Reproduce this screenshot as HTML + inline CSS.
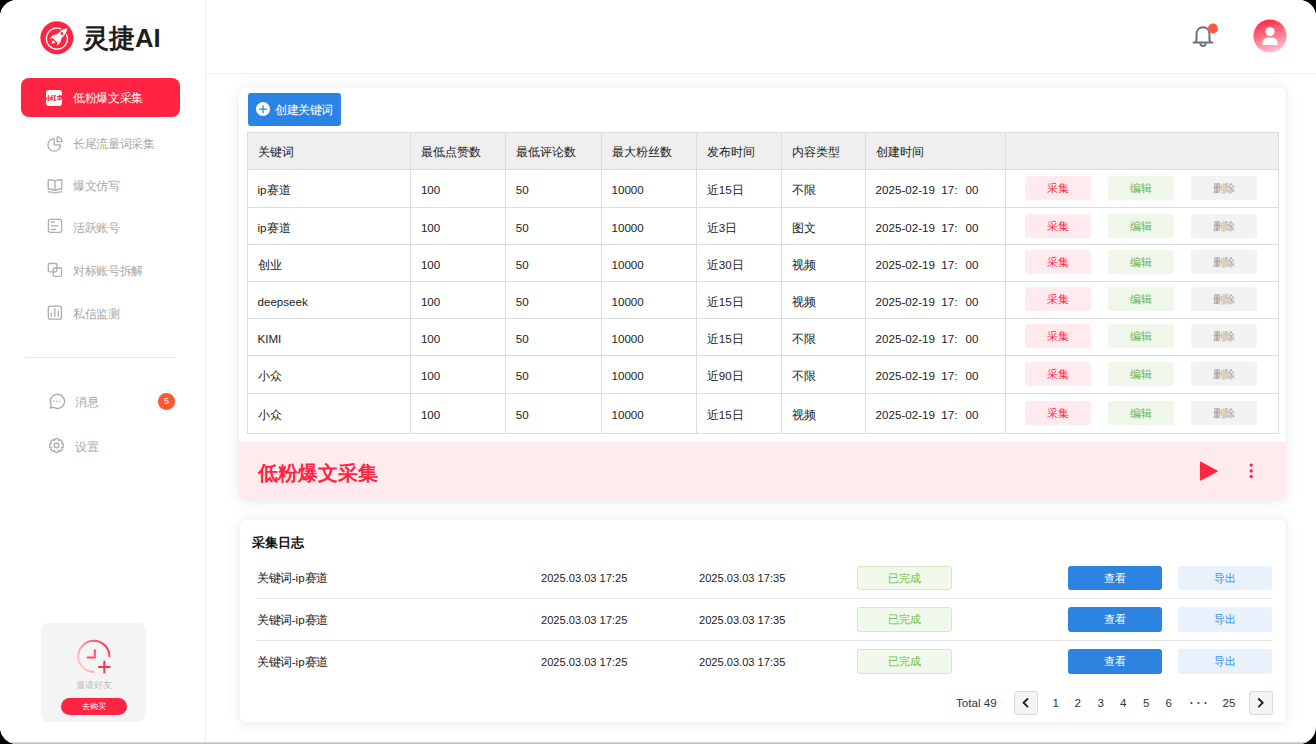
<!DOCTYPE html>
<html><head><meta charset="utf-8"><style>
*{box-sizing:border-box;margin:0;padding:0}
html,body{width:1316px;height:744px;overflow:hidden;background:#000}
body{font-family:"Liberation Sans",sans-serif;color:#222;position:relative}
.win{position:absolute;left:0;top:0;width:1316px;height:744px;background:#fff;border-radius:17px;overflow:hidden}
.bline{position:absolute;left:0;top:742px;width:1316px;height:2px;background:linear-gradient(#dcdcdc,#b8b8b8)}
.abs{position:absolute}
svg{position:absolute;overflow:visible}
.side{position:absolute;left:0;top:0;width:206px;height:743px;border-right:1px solid #eef0f3;background:#fff}
.hdr{position:absolute;left:206px;top:0;width:1110px;height:74px;border-bottom:1px solid #eef0f3;background:#fff}
.logo-t{position:absolute;left:82.5px;top:19.5px;font-size:25.5px;font-weight:bold;color:#1d1d1f;line-height:36px;letter-spacing:0.2px;white-space:nowrap}
.act{position:absolute;left:21px;top:78px;width:159px;height:39px;border-radius:8px;background:#ff2442}
.mi{position:absolute;left:72.6px;font-size:12px;transform:scale(0.97);transform-origin:0 50%;color:#a8a8a8;line-height:14px;white-space:nowrap}
.card{position:absolute;background:#fff;border-radius:5px;box-shadow:0 0 3px rgba(0,0,0,0.03),0 1px 16px rgba(0,0,0,0.09)}
.th,.td{position:absolute;font-size:11.6px;line-height:14px;white-space:nowrap;color:#222}
.hl{position:absolute;height:1px;background:#dcdcdc}
.vl{position:absolute;width:1px;background:#dcdcdc}
.b{position:absolute;width:66px;height:24px;line-height:24px;text-align:center;border-radius:3px;font-size:11px}
.bc{background:#ffebee;color:#ff2442}
.be{background:#eef7ea;color:#6ab04c}
.bd{background:#f2f2f2;color:#9a9a9a}
.lt{position:absolute;font-size:12px;color:#222;line-height:14px;white-space:nowrap}
.tag{position:absolute;left:857px;width:95px;height:24.5px;border:1px solid #cfeac3;background:#f0f9eb;color:#67c23a;border-radius:3px;font-size:11px;text-align:center;line-height:22.5px}
.vw{position:absolute;left:1068px;width:94px;height:24.5px;background:#2d83e0;color:#fff;border-radius:3px;font-size:11px;text-align:center;line-height:24.5px}
.ex{position:absolute;left:1178px;width:94px;height:24.5px;background:#e8f1fc;color:#3a8ee6;border-radius:3px;font-size:11px;text-align:center;line-height:24.5px}
.dv{position:absolute;left:256px;width:1016px;height:1px;background:#e3e3e3}
.pg{position:absolute;top:695.6px;font-size:11.6px;color:#333;line-height:14px;white-space:nowrap}
.pb{position:absolute;top:691px;width:24px;height:23.5px;border:1px solid #d9d9d9;border-radius:3px;background:#f4f4f4}
</style></head><body>
<div class="win">

<div class="side">
<svg style="left:0;top:0" width="206" height="74" viewBox="0 0 206 74">
<circle cx="56.9" cy="37.7" r="16.5" fill="#ff2442"/>
<path d="M66.42 34.21 A10.5 10.5 0 1 1 61.34 29.13" fill="none" stroke="#fff" stroke-width="1.4"/>
<g transform="translate(59 36.5) rotate(45)">
<path d="M0 -11.8 C2.6 -9 3 -5 3 -1 L3 5.5 L-3 5.5 L-3 -1 C-3 -5 -2.6 -9 0 -11.8 Z" fill="#fff"/>
<path d="M-3 -0.5 L-5.2 3.5 L-5 8 L-3 5.5 Z M3 -0.5 L5.2 3.5 L5 8 L3 5.5 Z" fill="#fff"/>
<circle cx="0" cy="-4.2" r="1.5" fill="#ff2442"/>
<path d="M-1.8 6.8 L0 10.5 L1.8 6.8 Z" fill="#fff"/>
</g>
</svg>
<div class="logo-t">灵捷AI</div>
<div class="act"></div>
<div class="abs" style="left:46px;top:90px;width:16px;height:16px;background:#fff;border-radius:3px"></div>
<svg style="left:0;top:0" width="80" height="120" viewBox="0 0 80 120" fill="none" stroke="#ff2442" stroke-width="1.1"><path d="M48.3 95 L48.3 100.6 L47.6 100.2 M46.9 97.3 L46.4 99.6 M49.7 97.3 L50.3 99.6 M52.2 95 L51.1 97.2 L52.6 97.2 L51 99.8 L52.8 99.4 M53.2 95.7 L56 95.7 M54.6 95.7 L54.6 100.2 M53 100.3 L56.2 100.3 M57 96.6 L61.6 96.6 L61.3 99.2 L57 99.2 M59.3 95 L59.3 100.6 M60.6 95 L61.4 95.8"/></svg>
<div class="mi" style="top:91px;color:#fff">低粉爆文采集</div>
<div class="mi" style="top:136.5px">长尾流量词采集</div>
<div class="mi" style="top:178.5px">爆文仿写</div>
<div class="mi" style="top:220.5px">活跃账号</div>
<div class="mi" style="top:263.5px">对标账号拆解</div>
<div class="mi" style="top:306.5px">私信监测</div>
<svg style="left:0;top:0" width="206" height="470" viewBox="0 0 206 470" fill="none" stroke="#acacac" stroke-width="1.3" stroke-linecap="round" stroke-linejoin="round">
<path d="M54.2 138.6 A6.3 6.3 0 1 0 60.5 144.9 L54.2 144.9 Z"/>
<path d="M57.2 136.8 A4.8 4.8 0 0 1 62 141.6 L57.2 141.6 Z"/>
<path d="M48.2 179.6 L48.2 189 C50.5 189 53 189.3 55 190.3 C57 189.3 59.5 189 61.8 189 L61.8 179.6 C59.5 179.6 57 180 55 181 C53 180 50.5 179.6 48.2 179.6 Z M55 181 L55 190.3"/>
<path d="M48.2 191.8 C50.5 191.8 53 192 55 193 C57 192 59.5 191.8 61.8 191.8"/>
<rect x="48.4" y="219.3" width="13.2" height="13" rx="2"/>
<path d="M51.4 222 L54.2 222 M51.4 225.8 L58.4 225.8 M51.4 229.4 L55.8 229.4"/>
<rect x="48.3" y="263.5" width="8.6" height="8.4" rx="1.5"/>
<rect x="53.2" y="268" width="8.4" height="8.4" rx="1.5"/>
<rect x="48.3" y="306.2" width="13.2" height="13" rx="2"/>
<path d="M51.2 313.2 L51.2 316.3 M54.8 308.8 L54.8 316.3 M58.4 311.4 L58.4 316.3"/>
<path d="M50.2 408 L51.3 405 A7.1 7.1 0 1 1 53.5 407.3 Z"/>
</svg>
<svg style="left:0;top:0" width="206" height="470" viewBox="0 0 206 470" fill="#acacac"><circle cx="53.6" cy="401.3" r="0.8"/><circle cx="56.6" cy="401.3" r="0.8"/><circle cx="59.6" cy="401.3" r="0.8"/></svg>
<svg style="left:0;top:0" width="206" height="470" viewBox="0 0 206 470" fill="none" stroke="#acacac" stroke-width="1.3" stroke-linejoin="round"><path d="M63.33 443.97 L63.33 447.03 L61.40 447.51 L61.39 447.54 L62.41 449.25 L60.25 451.41 L58.54 450.39 L58.51 450.40 L58.03 452.33 L54.97 452.33 L54.49 450.40 L54.46 450.39 L52.75 451.41 L50.59 449.25 L51.61 447.54 L51.60 447.51 L49.67 447.03 L49.67 443.97 L51.60 443.49 L51.61 443.46 L50.59 441.75 L52.75 439.59 L54.46 440.61 L54.49 440.60 L54.97 438.67 L58.03 438.67 L58.51 440.60 L58.54 440.61 L60.25 439.59 L62.41 441.75 L61.39 443.46 L61.40 443.49 Z"/><circle cx="56.5" cy="445.5" r="2.3"/></svg>
<div class="abs" style="left:26px;top:357px;width:149px;height:1px;background:#e6e6e6"></div>
<div class="mi" style="left:75px;top:394.5px">消息</div>
<div class="abs" style="left:158.3px;top:393.2px;width:16.6px;height:16.6px;border-radius:50%;background:#ff5733;color:#fff;font-size:9px;text-align:center;line-height:16.6px">5</div>
<div class="mi" style="left:75px;top:439.5px">设置</div>
<div class="abs" style="left:41px;top:623px;width:105px;height:99px;border-radius:8px;background:#f4f4f5"></div>
<svg style="left:0;top:0" width="206" height="744" viewBox="0 0 206 744">
<defs><linearGradient id="cg" x1="1" y1="0" x2="0" y2="0.6"><stop offset="0" stop-color="#ff2442"/><stop offset="1" stop-color="#ffc0c8"/></linearGradient></defs>
<path d="M109.4 656.3 A15.6 15.6 0 1 0 93.7 672" fill="none" stroke="url(#cg)" stroke-width="2" stroke-linecap="round"/>
<path d="M94.8 650.2 L94.8 657.6 L87.6 657.6" fill="none" stroke="#ff4d63" stroke-width="2" stroke-linecap="round" stroke-linejoin="round"/>
<path d="M104.3 661.6 L104.3 672.4 M98.9 667 L109.7 667" fill="none" stroke="#ff3350" stroke-width="2" stroke-linecap="round"/>
</svg>
<div class="abs" style="left:41px;top:679px;width:105px;text-align:center;font-size:8.5px;color:#bdbdbd;line-height:12px">邀请好友</div>
<div class="abs" style="left:61px;top:697.6px;width:66px;height:17.7px;border-radius:9px;background:#ff2442;color:#fff;font-size:8.2px;text-align:center;line-height:17.7px">去购买</div>
</div>
<div class="hdr"></div>
<svg style="left:0;top:0" width="1316" height="74" viewBox="0 0 1316 74">
<path d="M1195.8 41.9 C1196.8 40.5 1196.5 38.8 1196.5 36.5 L1196.5 34.3 C1196.5 29.8 1199.3 27.3 1203 27.3 C1206.7 27.3 1209.5 29.8 1209.5 34.3 L1209.5 36.5 C1209.5 38.8 1209.2 40.5 1210.2 41.9" fill="none" stroke="#6b7078" stroke-width="2" stroke-linejoin="round"/>
<path d="M1193.6 42.4 L1212.4 42.4" stroke="#6b7078" stroke-width="2" stroke-linecap="round"/>
<path d="M1200.3 43.2 A2.7 2.7 0 0 0 1205.7 43.2" fill="none" stroke="#6b7078" stroke-width="2"/>
<circle cx="1213" cy="28.5" r="5" fill="#ff5a45"/>
<defs><linearGradient id="ag" x1="0.3" y1="0" x2="0.6" y2="1"><stop offset="0" stop-color="#ff2442"/><stop offset="1" stop-color="#ffc4cf"/></linearGradient></defs>
<circle cx="1270" cy="36" r="16.6" fill="url(#ag)"/>
<circle cx="1270" cy="31.6" r="4.6" fill="#fff"/>
<path d="M1262.5 45 L1262.5 42.5 C1262.5 39.5 1265 37.4 1268 37.4 L1272 37.4 C1275 37.4 1277.5 39.5 1277.5 42.5 L1277.5 45 Z" fill="#fff"/>
</svg>
<div class="card" style="left:238.5px;top:87.5px;width:1047.5px;height:412px"></div>
<div class="abs" style="left:248px;top:93px;width:93px;height:32.7px;border-radius:3px;background:#2b83e3"></div>
<svg style="left:0;top:0" width="400" height="140" viewBox="0 0 400 140"><circle cx="263" cy="109.1" r="7" fill="#fff"/><path d="M263 105.2 L263 113 M259.1 109.1 L266.9 109.1" stroke="#2b83e3" stroke-width="1.3"/></svg>
<div class="abs" style="left:275.3px;top:102.5px;font-size:12px;transform:scale(0.965);transform-origin:0 50%;color:#fff;line-height:14px;white-space:nowrap">创建关键词</div>
<div class="abs" style="left:247px;top:131.8px;width:1030.5px;height:36.79999999999998px;background:#efefef"></div>
<div class="hl" style="left:247px;top:131.8px;width:1031.5px"></div>
<div class="hl" style="left:247px;top:168.6px;width:1031.5px"></div>
<div class="hl" style="left:247px;top:206.8px;width:1031.5px"></div>
<div class="hl" style="left:247px;top:244.2px;width:1031.5px"></div>
<div class="hl" style="left:247px;top:280.7px;width:1031.5px"></div>
<div class="hl" style="left:247px;top:318px;width:1031.5px"></div>
<div class="hl" style="left:247px;top:354.9px;width:1031.5px"></div>
<div class="hl" style="left:247px;top:392.8px;width:1031.5px"></div>
<div class="hl" style="left:247px;top:432.8px;width:1031.5px"></div>
<div class="vl" style="left:247px;top:131.8px;height:301.0px"></div>
<div class="vl" style="left:410.4px;top:131.8px;height:301.0px"></div>
<div class="vl" style="left:505.2px;top:131.8px;height:301.0px"></div>
<div class="vl" style="left:601px;top:131.8px;height:301.0px"></div>
<div class="vl" style="left:696.2px;top:131.8px;height:301.0px"></div>
<div class="vl" style="left:781px;top:131.8px;height:301.0px"></div>
<div class="vl" style="left:865.1px;top:131.8px;height:301.0px"></div>
<div class="vl" style="left:1005px;top:131.8px;height:301.0px"></div>
<div class="vl" style="left:1277.5px;top:131.8px;height:301.0px"></div>
<div class="th" style="left:257.5px;top:145.2px">关键词</div>
<div class="th" style="left:420.9px;top:145.2px">最低点赞数</div>
<div class="th" style="left:515.7px;top:145.2px">最低评论数</div>
<div class="th" style="left:611.5px;top:145.2px">最大粉丝数</div>
<div class="th" style="left:706.7px;top:145.2px">发布时间</div>
<div class="th" style="left:791.5px;top:145.2px">内容类型</div>
<div class="th" style="left:875.6px;top:145.2px">创建时间</div>
<div class="td" style="left:257.5px;top:182.89999999999998px">ip赛道</div>
<div class="td" style="left:420.9px;top:182.89999999999998px">100</div>
<div class="td" style="left:515.7px;top:182.89999999999998px">50</div>
<div class="td" style="left:611.5px;top:182.89999999999998px">10000</div>
<div class="td" style="left:706.7px;top:182.89999999999998px">近15日</div>
<div class="td" style="left:791.5px;top:182.89999999999998px">不限</div>
<div class="td" style="left:875.6px;top:182.89999999999998px">2025-02-19&nbsp; 17:<span style="display:inline-block;width:8px"></span>00</div>
<div class="b bc" style="left:1025px;top:175.7px">采集</div><div class="b be" style="left:1108px;top:175.7px">编辑</div><div class="b bd" style="left:1191px;top:175.7px">删除</div>
<div class="td" style="left:257.5px;top:220.7px">ip赛道</div>
<div class="td" style="left:420.9px;top:220.7px">100</div>
<div class="td" style="left:515.7px;top:220.7px">50</div>
<div class="td" style="left:611.5px;top:220.7px">10000</div>
<div class="td" style="left:706.7px;top:220.7px">近3日</div>
<div class="td" style="left:791.5px;top:220.7px">图文</div>
<div class="td" style="left:875.6px;top:220.7px">2025-02-19&nbsp; 17:<span style="display:inline-block;width:8px"></span>00</div>
<div class="b bc" style="left:1025px;top:213.5px">采集</div><div class="b be" style="left:1108px;top:213.5px">编辑</div><div class="b bd" style="left:1191px;top:213.5px">删除</div>
<div class="td" style="left:257.5px;top:257.65px">创业</div>
<div class="td" style="left:420.9px;top:257.65px">100</div>
<div class="td" style="left:515.7px;top:257.65px">50</div>
<div class="td" style="left:611.5px;top:257.65px">10000</div>
<div class="td" style="left:706.7px;top:257.65px">近30日</div>
<div class="td" style="left:791.5px;top:257.65px">视频</div>
<div class="td" style="left:875.6px;top:257.65px">2025-02-19&nbsp; 17:<span style="display:inline-block;width:8px"></span>00</div>
<div class="b bc" style="left:1025px;top:250.45px">采集</div><div class="b be" style="left:1108px;top:250.45px">编辑</div><div class="b bd" style="left:1191px;top:250.45px">删除</div>
<div class="td" style="left:257.5px;top:294.55px">deepseek</div>
<div class="td" style="left:420.9px;top:294.55px">100</div>
<div class="td" style="left:515.7px;top:294.55px">50</div>
<div class="td" style="left:611.5px;top:294.55px">10000</div>
<div class="td" style="left:706.7px;top:294.55px">近15日</div>
<div class="td" style="left:791.5px;top:294.55px">视频</div>
<div class="td" style="left:875.6px;top:294.55px">2025-02-19&nbsp; 17:<span style="display:inline-block;width:8px"></span>00</div>
<div class="b bc" style="left:1025px;top:287.35px">采集</div><div class="b be" style="left:1108px;top:287.35px">编辑</div><div class="b bd" style="left:1191px;top:287.35px">删除</div>
<div class="td" style="left:257.5px;top:331.65px">KIMI</div>
<div class="td" style="left:420.9px;top:331.65px">100</div>
<div class="td" style="left:515.7px;top:331.65px">50</div>
<div class="td" style="left:611.5px;top:331.65px">10000</div>
<div class="td" style="left:706.7px;top:331.65px">近15日</div>
<div class="td" style="left:791.5px;top:331.65px">不限</div>
<div class="td" style="left:875.6px;top:331.65px">2025-02-19&nbsp; 17:<span style="display:inline-block;width:8px"></span>00</div>
<div class="b bc" style="left:1025px;top:324.45px">采集</div><div class="b be" style="left:1108px;top:324.45px">编辑</div><div class="b bd" style="left:1191px;top:324.45px">删除</div>
<div class="td" style="left:257.5px;top:369.05px">小众</div>
<div class="td" style="left:420.9px;top:369.05px">100</div>
<div class="td" style="left:515.7px;top:369.05px">50</div>
<div class="td" style="left:611.5px;top:369.05px">10000</div>
<div class="td" style="left:706.7px;top:369.05px">近90日</div>
<div class="td" style="left:791.5px;top:369.05px">不限</div>
<div class="td" style="left:875.6px;top:369.05px">2025-02-19&nbsp; 17:<span style="display:inline-block;width:8px"></span>00</div>
<div class="b bc" style="left:1025px;top:361.85px">采集</div><div class="b be" style="left:1108px;top:361.85px">编辑</div><div class="b bd" style="left:1191px;top:361.85px">删除</div>
<div class="td" style="left:257.5px;top:408.0px">小众</div>
<div class="td" style="left:420.9px;top:408.0px">100</div>
<div class="td" style="left:515.7px;top:408.0px">50</div>
<div class="td" style="left:611.5px;top:408.0px">10000</div>
<div class="td" style="left:706.7px;top:408.0px">近15日</div>
<div class="td" style="left:791.5px;top:408.0px">视频</div>
<div class="td" style="left:875.6px;top:408.0px">2025-02-19&nbsp; 17:<span style="display:inline-block;width:8px"></span>00</div>
<div class="b bc" style="left:1025px;top:400.8px">采集</div><div class="b be" style="left:1108px;top:400.8px">编辑</div><div class="b bd" style="left:1191px;top:400.8px">删除</div>
<div class="abs" style="left:239px;top:442px;width:1047px;height:57.5px;background:#ffebee;border-radius:0 0 5px 5px"></div>
<div class="abs" style="left:258px;top:460.5px;font-size:20px;font-weight:bold;color:#ff2442;line-height:24px;white-space:nowrap">低粉爆文采集</div>
<svg style="left:0;top:0" width="1316" height="500" viewBox="0 0 1316 500"><path d="M1200.5 462 L1217.5 471.2 L1200.5 480.3 Z" fill="#ff2442" stroke="#ff2442" stroke-width="1" stroke-linejoin="round"/><circle cx="1251.2" cy="465.1" r="1.7" fill="#ff2442"/><circle cx="1251.2" cy="470.9" r="1.7" fill="#ff2442"/><circle cx="1251.2" cy="476.6" r="1.7" fill="#ff2442"/></svg>
<div class="card" style="left:239.5px;top:519.5px;width:1046.5px;height:202.3px"></div>
<div class="abs" style="left:252px;top:535px;font-size:13.3px;font-weight:bold;color:#111;line-height:16px;white-space:nowrap">采集日志</div>
<div class="lt" style="left:257px;top:571px;transform:scale(0.965);transform-origin:0 50%">关键词-ip赛道</div><div class="lt" style="left:541px;top:570.8px;font-size:11.1px">2025.03.03 17:25</div><div class="lt" style="left:699px;top:570.8px;font-size:11.1px">2025.03.03 17:35</div>
<div class="tag" style="top:565.5px">已完成</div><div class="vw" style="top:565.5px">查看</div><div class="ex" style="top:565.5px">导出</div>
<div class="lt" style="left:257px;top:613px;transform:scale(0.965);transform-origin:0 50%">关键词-ip赛道</div><div class="lt" style="left:541px;top:612.8px;font-size:11.1px">2025.03.03 17:25</div><div class="lt" style="left:699px;top:612.8px;font-size:11.1px">2025.03.03 17:35</div>
<div class="tag" style="top:607.4px">已完成</div><div class="vw" style="top:607.4px">查看</div><div class="ex" style="top:607.4px">导出</div>
<div class="lt" style="left:257px;top:655px;transform:scale(0.965);transform-origin:0 50%">关键词-ip赛道</div><div class="lt" style="left:541px;top:654.8px;font-size:11.1px">2025.03.03 17:25</div><div class="lt" style="left:699px;top:654.8px;font-size:11.1px">2025.03.03 17:35</div>
<div class="tag" style="top:649.4px">已完成</div><div class="vw" style="top:649.4px">查看</div><div class="ex" style="top:649.4px">导出</div>
<div class="dv" style="top:598.2px"></div><div class="dv" style="top:640.1px"></div>
<div class="pg" style="left:956px">Total 49</div>
<div class="pb" style="left:1014px"></div><div class="pb" style="left:1249px"></div>
<svg style="left:0;top:0" width="1316" height="744" viewBox="0 0 1316 744" fill="none" stroke="#222" stroke-width="1.9" stroke-linecap="round" stroke-linejoin="round"><path d="M1027.5 699 L1023.6 702.8 L1027.5 706.6"/><path d="M1258.8 699 L1262.7 702.8 L1258.8 706.6"/></svg>
<div class="pg" style="left:1052.5px">1</div>
<div class="pg" style="left:1074.5px">2</div>
<div class="pg" style="left:1097.5px">3</div>
<div class="pg" style="left:1120px">4</div>
<div class="pg" style="left:1143px">5</div>
<div class="pg" style="left:1165.5px">6</div>
<div class="pg" style="left:1222.5px">25</div>
<svg style="left:0;top:0" width="1316" height="744" viewBox="0 0 1316 744" fill="#333"><circle cx="1191.5" cy="703" r="1"/><circle cx="1198.5" cy="703" r="1"/><circle cx="1205.5" cy="703" r="1"/></svg>
<div class="bline"></div>
</div>
</body></html>
